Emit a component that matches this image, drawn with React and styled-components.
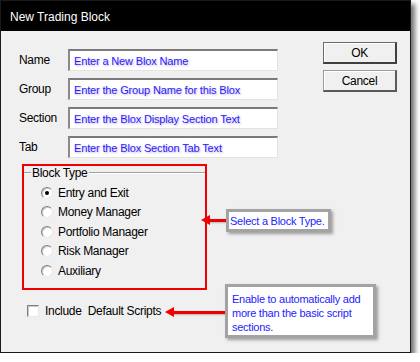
import React, { useState } from "react"
import styled, { createGlobalStyle } from "styled-components"

const GlobalStyle = createGlobalStyle`
  body {
    margin: 0;
    background: #ffffff;
    font-family: "Liberation Sans", Arial, sans-serif;
  }
`

const Window = styled.div`
  width: 411px;
  height: 353px;
  box-sizing: border-box;
  border: 1px solid #1a1a1a;
  background: #f0f0f0;
  box-shadow: 4px 4px 5px rgba(0, 0, 0, 0.55);
  position: relative;
  display: flex;
  flex-direction: column;
`

const TitleBar = styled.div`
  height: 30px;
  background: #000;
  color: #fff;
  font-size: 12px;
  display: flex;
  align-items: center;
  padding-left: 9px;
  padding-top: 2px;
  box-sizing: border-box;
`

const Content = styled.div`
  display: flex;
  padding-left: 18px;
`

const FormColumn = styled.div`
  width: 260px;
  padding-top: 18px;
  display: flex;
  flex-direction: column;
`

const Fields = styled.div`
  display: flex;
  flex-direction: column;
  gap: 7px;
`

const FieldRow = styled.div`
  display: flex;
  align-items: center;
  height: 22px;
`

const Label = styled.span`
  width: 49px;
  font-size: 12px;
  letter-spacing: -0.3px;
  color: #000;
`

const TextBox = styled.div`
  width: 210px;
  height: 22px;
  box-sizing: border-box;
  background: #fff;
  border-style: solid;
  border-width: 2px 1px 1px 2px;
  border-color: #7a7a7a #e3e3e3 #e3e3e3 #8a8a8a;
  font-size: 11px;
  letter-spacing: -0.15px;
  color: #1f1fff;
  text-shadow: 1px 1px 2px rgba(140, 80, 180, 0.45);
  display: flex;
  align-items: center;
  padding-left: 4px;
  white-space: nowrap;
`

const ButtonColumn = styled.div`
  margin-left: 44px;
  padding-top: 11px;
  display: flex;
  flex-direction: column;
  gap: 6px;
`

const Button = styled.button`
  width: 74px;
  height: 22px;
  box-sizing: border-box;
  background: #f0f0f0;
  font-family: "Liberation Sans", Arial, sans-serif;
  font-size: 12px;
  letter-spacing: -0.3px;
  color: #000;
  padding: 0;
  border-style: solid;
  border-width: 1px 2px 2px 1px;
  border-color: ${(p) =>
    p.$default ? "#6a6a6a #404040 #404040 #6a6a6a" : "#9a9a9a #5a5a5a #5a5a5a #9a9a9a"};
  box-shadow: inset 1px 1px 0 #ffffff;
`

const BlockGroup = styled.div`
  margin-top: 6px;
  margin-left: 3px;
  width: 185px;
  height: 126px;
  box-sizing: border-box;
  border: 2px solid #f00000;
  display: flex;
  flex-direction: column;
`

const Legend = styled.div`
  height: 14px;
  display: flex;
  align-items: center;
  font-size: 12px;
  letter-spacing: -0.3px;
  color: #000;
  &::before,
  &::after {
    content: "";
    height: 1px;
    background: #a0a0a0;
    border-bottom: 1px solid #fff;
  }
  &::before {
    width: 7px;
    margin-right: 1px;
  }
  &::after {
    flex: 1;
    margin-left: 2px;
  }
`

const RadioList = styled.div`
  margin-top: 3px;
  padding-left: 17px;
  display: flex;
  flex-direction: column;
`

const OptionRow = styled.label`
  height: 19.5px;
  display: flex;
  align-items: center;
  gap: 5px;
  font-size: 12px;
  letter-spacing: -0.3px;
  color: #000;
`

const RadioDot = styled.span`
  width: 12px;
  height: 12px;
  box-sizing: border-box;
  border-radius: 50%;
  background: #fff;
  border: 1px solid;
  border-color: #808080 #e8e8e8 #e8e8e8 #808080;
  box-shadow: inset 1px 1px 0 #c8c8c8;
  display: flex;
  align-items: center;
  justify-content: center;
  &::after {
    content: "";
    width: 4px;
    height: 4px;
    border-radius: 50%;
    background: ${(p) => (p.$checked ? "#000" : "transparent")};
  }
`

const CheckRow = styled.label`
  margin-top: 14px;
  margin-left: 8px;
  display: flex;
  align-items: center;
  gap: 6px;
  font-size: 12px;
  letter-spacing: -0.3px;
  white-space: pre;
  color: #000;
`

const CheckBox = styled.span`
  width: 12px;
  height: 12px;
  box-sizing: border-box;
  background: #fff;
  border: 1px solid;
  border-color: #808080 #e8e8e8 #e8e8e8 #808080;
  box-shadow: inset 1px 1px 0 #c8c8c8;
`

const Callout = styled.div`
  position: absolute;
  left: ${(p) => p.$x}px;
  top: ${(p) => p.$y}px;
  width: ${(p) => p.$w}px;
  height: ${(p) => p.$h}px;
  box-sizing: border-box;
  background: #fff;
  border: 3px solid #a3a3a3;
  box-shadow: 2px 2px 3px rgba(0, 0, 0, 0.35);
  color: #2222ff;
  font-size: 11px;
  letter-spacing: -0.25px;
  line-height: 14px;
  white-space: nowrap;
  padding: ${(p) => p.$pad};
`

const Arrow = styled.div`
  position: absolute;
  left: ${(p) => p.$x}px;
  top: ${(p) => p.$y - 1.5}px;
  width: ${(p) => p.$w}px;
  height: 3px;
  background: #f00000;
  box-shadow: 1px 1px 2px rgba(0, 0, 0, 0.25);
  &::before {
    content: "";
    position: absolute;
    left: -4px;
    top: -3.5px;
    border-style: solid;
    border-width: 5px 9px 5px 0;
    border-color: transparent #f00000 transparent transparent;
  }
`

const fields = [
  ["Name", "Enter a New Blox Name"],
  ["Group", "Enter the Group Name for this Blox"],
  ["Section", "Enter the Blox Display Section Text"],
  ["Tab", "Enter the Blox Section Tab Text"],
]

const blockTypes = ["Entry and Exit", "Money Manager", "Portfolio Manager", "Risk Manager", "Auxiliary"]

function App() {
  const [Selected, setSelected] = useState(0)

  return (
    <>
      <GlobalStyle />
      <Window>
        <TitleBar>New Trading Block</TitleBar>
        <Content>
          <FormColumn>
            <Fields>
              {fields.map(([label, hint]) => (
                <FieldRow key={label}>
                  <Label>{label}</Label>
                  <TextBox>{hint}</TextBox>
                </FieldRow>
              ))}
            </Fields>
            <BlockGroup>
              <Legend>Block Type</Legend>
              <RadioList>
                {blockTypes.map((name, i) => (
                  <OptionRow key={name} onClick={() => setSelected(i)}>
                    <RadioDot $checked={Selected === i} />
                    {name}
                  </OptionRow>
                ))}
              </RadioList>
            </BlockGroup>
            <CheckRow>
              <CheckBox />
              {"Include  Default Scripts"}
            </CheckRow>
          </FormColumn>
          <ButtonColumn>
            <Button $default>OK</Button>
            <Button>Cancel</Button>
          </ButtonColumn>
        </Content>
        <Arrow $x={204} $y={219} $w={21} />
        <Callout $x={225} $y={208} $w={105} $h={23} $pad="2px 0 0 1px">
          Select a Block Type.
        </Callout>
        <Arrow $x={168} $y={311} $w={56} />
        <Callout $x={224} $y={283} $w={151} $h={54} $pad="5px 0 0 4px">
          Enable to automatically add
          <br />
          more than the basic script
          <br />
          sections.
        </Callout>
      </Window>
    </>
  )
}

export default App
